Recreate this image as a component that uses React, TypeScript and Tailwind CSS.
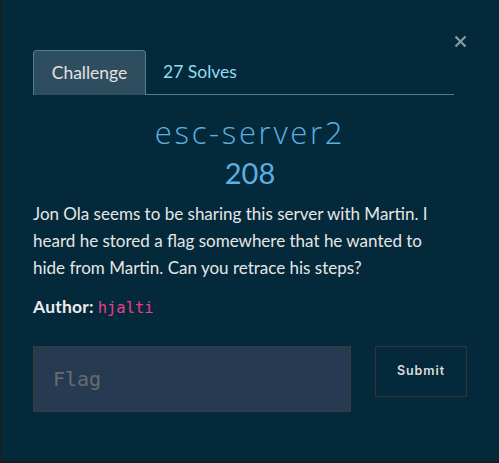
import React from "react";

export default function App() {
  return (
    <div className="w-[499px] h-[463px] bg-[#03293a] border-l border-b-2 border-[#1c1c1c] relative overflow-hidden" style={{ fontFamily: "Lato, 'Open Sans', sans-serif" }}>
      <button className="absolute left-[453px] top-[35px] text-[#8a9ba3] leading-none">
        <svg width="13" height="13" viewBox="0 0 13 13">
          <path d="M1.5 1.5 L11.5 11.5 M11.5 1.5 L1.5 11.5" stroke="#8a9ba3" strokeWidth="2.2" strokeLinecap="butt" />
        </svg>
      </button>
      <div className="pt-[50px] pl-[32px] pr-[32px]">
        <div className="flex w-[421px] border-b border-[#4f7d92] h-[45px]">
          <div className="w-[113px] h-[45px] -mb-px bg-[#2e4d5f] border border-b-0 border-[#4f7d92] rounded-t-[4px] flex items-center justify-center text-[17.5px] text-[#e2e2e2]">
            Challenge
          </div>
          <div className="pl-[17px] flex items-center text-[17.5px] text-[#92dbef]">27 Solves</div>
        </div>
        <div className="mt-[18px] text-center text-[31px] leading-[38px] text-[#5bb0e0] tracking-[2.7px] font-light" style={{ fontFamily: "'Open Sans', sans-serif" }}>
          esc-server2
        </div>
        <div className="mt-[5px] text-center text-[29px] leading-[34px] text-[#5bb0e0]">208</div>
        <p className="mt-[10px] text-[17px] leading-[27px] text-[#e6e6e6] w-[420px]">
          Jon Ola seems to be sharing this server with Martin. I heard he stored a flag somewhere that he wanted to hide from Martin. Can you retrace his steps?
        </p>
        <div className="mt-[12px] flex items-baseline text-[17.5px] leading-[27px]">
          <span className="font-bold text-[#ececec] tracking-[0.2px]">Author:</span>
          <span className="ml-[4px] text-[15.5px] text-[#e83e8c]" style={{ fontFamily: "'DejaVu Sans Mono', monospace" }}>hjalti</span>
        </div>
        <div className="mt-[24px] flex items-start">
          <div className="w-[318px] h-[66px] bg-[#263b52] border border-[#3c3c3c] flex items-center pl-[19px]">
            <span className="text-[20px] text-[#6b6b6b]" style={{ fontFamily: "'DejaVu Sans Mono', monospace" }}>Flag</span>
          </div>
          <button className="ml-[24px] w-[92px] h-[51px] border border-[#353535] text-[12.5px] font-semibold tracking-[0.9px] text-[#dcdcdc]" style={{ fontFamily: "Inter, sans-serif" }}>
            Submit
          </button>
        </div>
      </div>
    </div>
  );
}
